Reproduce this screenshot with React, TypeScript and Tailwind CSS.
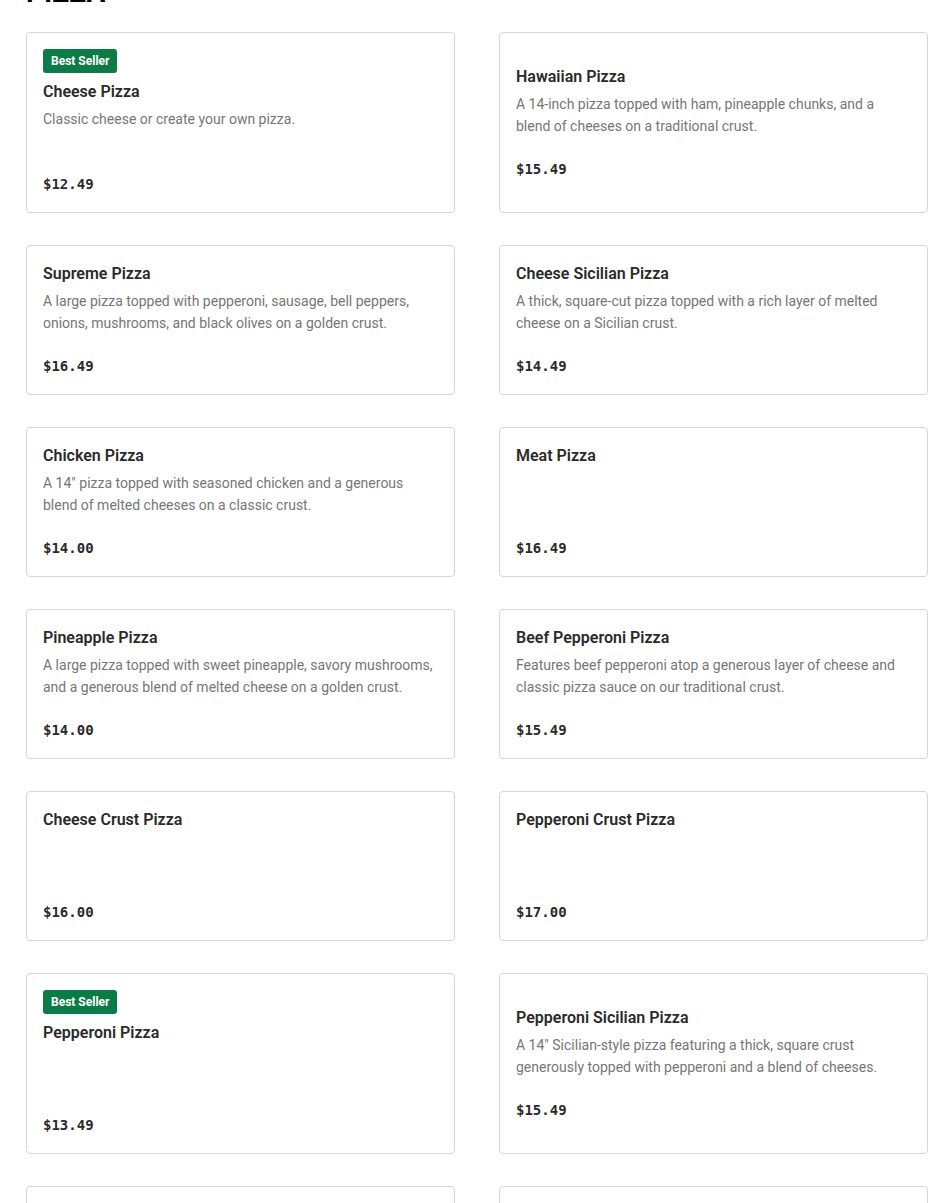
type Item = {
  name: string;
  description?: string;
  price: string;
  bestSeller?: boolean;
};

const items: Item[] = [
  { name: "Cheese Pizza", description: "Classic cheese or create your own pizza.", price: "$12.49", bestSeller: true },
  { name: "Hawaiian Pizza", description: "A 14-inch pizza topped with ham, pineapple chunks, and a blend of cheeses on a traditional crust.", price: "$15.49" },
  { name: "Supreme Pizza", description: "A large pizza topped with pepperoni, sausage, bell peppers, onions, mushrooms, and black olives on a golden crust.", price: "$16.49" },
  { name: "Cheese Sicilian Pizza", description: "A thick, square-cut pizza topped with a rich layer of melted cheese on a Sicilian crust.", price: "$14.49" },
  { name: "Chicken Pizza", description: 'A 14" pizza topped with seasoned chicken and a generous blend of melted cheeses on a classic crust.', price: "$14.00" },
  { name: "Meat Pizza", price: "$16.49" },
  { name: "Pineapple Pizza", description: "A large pizza topped with sweet pineapple, savory mushrooms, and a generous blend of melted cheese on a golden crust.", price: "$14.00" },
  { name: "Beef Pepperoni Pizza", description: "Features beef pepperoni atop a generous layer of cheese and classic pizza sauce on our traditional crust.", price: "$15.49" },
  { name: "Cheese Crust Pizza", price: "$16.00" },
  { name: "Pepperoni Crust Pizza", price: "$17.00" },
  { name: "Pepperoni Pizza", price: "$13.49", bestSeller: true },
  { name: "Pepperoni Sicilian Pizza", description: 'A 14" Sicilian-style pizza featuring a thick, square crust generously topped with pepperoni and a blend of cheeses.', price: "$15.49" },
  { name: "Veggie Pizza", description: "Fresh peppers, onions, mushrooms and olives on a golden crust.", price: "$15.00" },
  { name: "White Pizza", description: "Ricotta, mozzarella and garlic on a traditional crust.", price: "$15.00" },
];

function MenuCard({ item }: { item: Item }) {
  return (
    <div className="flex min-h-[150px] flex-col justify-center rounded border border-[#d6d6d6] bg-white px-4 py-4">
      {item.bestSeller && (
        <div className="mb-[7px] self-start rounded-[3px] bg-[#0c7c46] px-2 py-[5px] text-[12px] leading-[14px] font-bold text-white">
          Best Seller
        </div>
      )}
      <h3 className="text-base leading-6 font-semibold text-[#2a2a2a]">{item.name}</h3>
      {/* description area keeps two lines even when empty */}
      <p className="mt-1 min-h-[44px] text-sm leading-[22px] text-[#767676]">{item.description}</p>
      <div
        className="mt-5 text-sm leading-6 font-bold text-[#2a2a2a]"
        style={{ fontFamily: '"DejaVu Sans Mono", monospace' }}
      >
        {item.price}
      </div>
    </div>
  );
}

export default function App() {
  return (
    <main
      className="min-h-screen overflow-hidden bg-white pl-[26px] pr-[22px]"
      style={{ fontFamily: 'Roboto, "Liberation Sans", sans-serif' }}
    >
      <h2 className="-mt-[23px] mb-[23px] text-[28px] leading-8 font-bold text-black">PIZZA</h2>
      <div className="grid grid-cols-2 gap-x-[44px] gap-y-[32px]">
        {items.map((item) => (
          <MenuCard key={item.name} item={item} />
        ))}
      </div>
    </main>
  );
}
